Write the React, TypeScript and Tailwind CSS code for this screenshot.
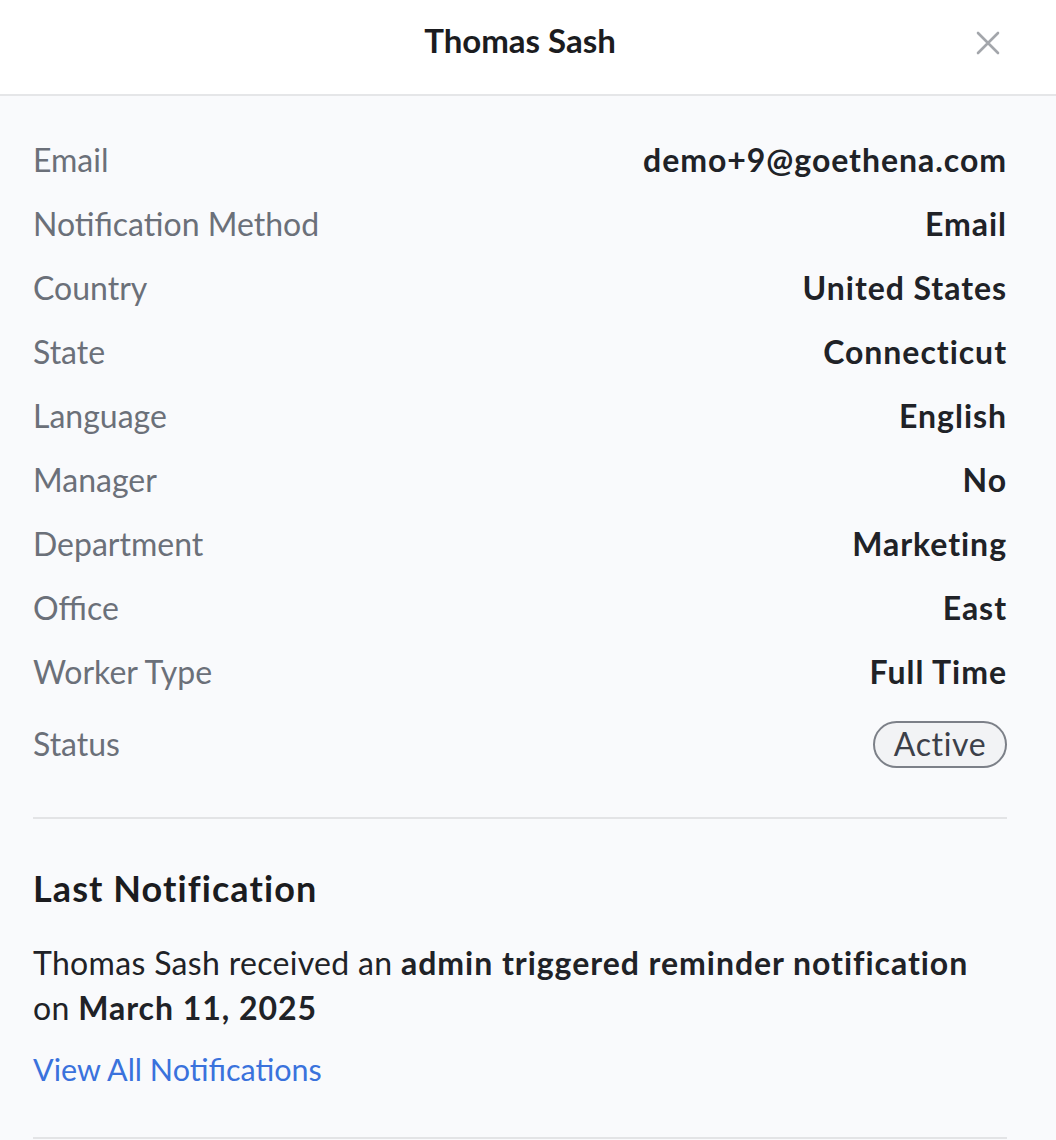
import React from "react";

const rows: [string, string][] = [
  ["Email", "demo+9@goethena.com"],
  ["Notification Method", "Email"],
  ["Country", "United States"],
  ["State", "Connecticut"],
  ["Language", "English"],
  ["Manager", "No"],
  ["Department", "Marketing"],
  ["Office", "East"],
  ["Worker Type", "Full Time"],
];

export default function App() {
  return (
    <div
      className="w-[1056px] h-[1140px] overflow-hidden bg-[#f9fafc]"
      style={{ fontFamily: "Lato, 'Noto Sans', sans-serif" }}
    >
      <div className="relative h-[96px] bg-white border-b-2 border-[#e5e6e8] flex items-center justify-center pr-[16px]">
        <div className="text-[33px] font-bold text-[#1b1c1f] leading-none -mt-[14px]">Thomas Sash</div>
        <button className="absolute left-[976px] top-[31px] w-[24px] h-[24px] text-[#a3a6ab]">
          <svg viewBox="0 0 24 24" width="24" height="24" fill="none" stroke="currentColor" strokeWidth="2.6" strokeLinecap="round">
            <path d="M2 2L22 22M22 2L2 22" />
          </svg>
        </button>
      </div>
      <div className="pl-[33px] pr-[49px] pt-[32px]">
        {rows.map(([k, v]) => (
          <div key={k} className="h-[64px] flex items-center justify-between text-[32px] leading-none">
            <span className="text-[#6b7079]">{k}</span>
            <span className="font-bold text-[#202227] tracking-[0.03em]">{v}</span>
          </div>
        ))}
        <div className="h-[80px] flex items-center justify-between text-[32px] leading-none">
          <span className="text-[#6b7079]">Status</span>
          <span className="h-[47px] w-[134px] justify-center flex items-center rounded-full border-2 border-[#7c8088] bg-[#f2f3f5] text-[#3c4049] tracking-[0.02em]">
            Active
          </span>
        </div>
        <div className="mt-[33px] border-t-2 border-[#e3e4e6]" />
        <div className="mt-[51px] text-[36px] font-bold text-[#1b1c1f] leading-none tracking-[0.03em]">Last Notification</div>
        <div className="mt-[34px] text-[32px] leading-[45px] text-[#202227] tracking-[0.01em]">
          Thomas Sash received an <span className="font-bold tracking-[0.03em]">admin triggered reminder notification</span>
          <br />
          on <span className="font-bold tracking-[0.03em]">March 11, 2025</span>
        </div>
        <div className="mt-[24px] text-[30.5px] leading-none text-[#3a72dc]">View All Notifications</div>
        <div className="mt-[52px] border-t-2 border-[#e3e4e6]" />
      </div>
    </div>
  );
}
